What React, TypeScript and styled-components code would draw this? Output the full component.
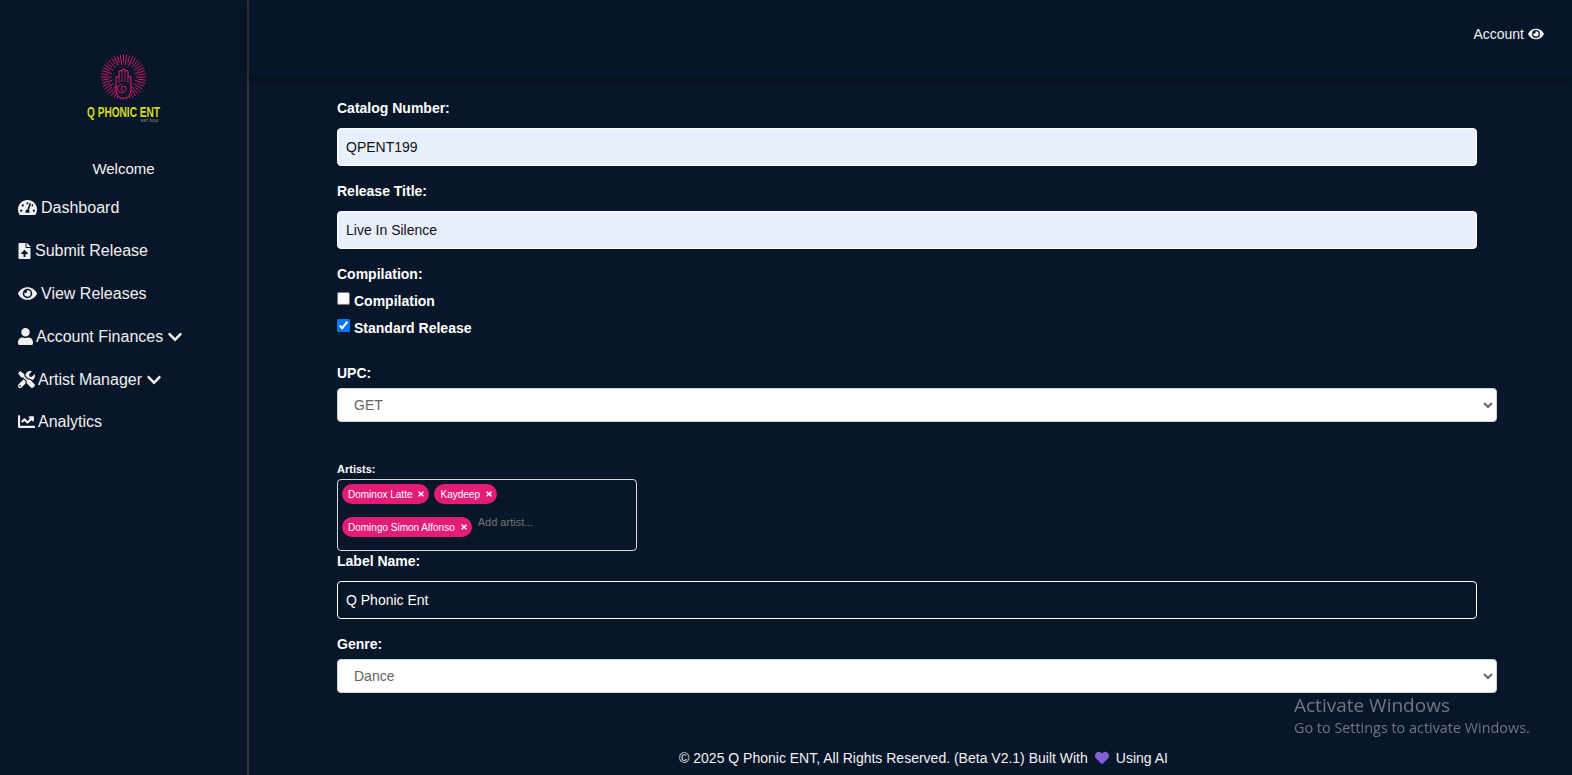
import React from 'react';
import styled, { createGlobalStyle } from 'styled-components';
import {
  FaChartLine,
  FaChevronDown,
  FaEye,
  FaFileUpload,
  FaHeart,
  FaTachometerAlt,
  FaTimes,
  FaTools,
  FaUser,
} from 'react-icons/fa';

const GlobalStyle = createGlobalStyle`
  html, body {
    margin: 0;
    height: 100%;
    overflow: hidden;
    background: #071628;
    font-family: "Liberation Sans", Arial, sans-serif;
    color: #fff;
  }
  * {
    box-sizing: border-box;
  }
`;

const Logo = () => (
  <LogoBox>
    <LogoArt width="89" height="89" viewBox="0 0 89 89">
      <g stroke="#d01866" strokeWidth="1" fill="none">
        {Array.from({ length: 44 }).map((_, i) => {
          const a = (i / 44) * Math.PI * 2;
          const inner = i % 2 ? 15 : 12;
          return (
            <line
              key={i}
              x1={44.5 + Math.cos(a) * inner}
              y1={37 + Math.sin(a) * inner}
              x2={44.5 + Math.cos(a) * 22.5}
              y2={37 + Math.sin(a) * 22.5}
            />
          );
        })}
      </g>
      <path
        d="M37 50 V38 a1.5 1.5 0 0 1 3 0 V32 a1.5 1.5 0 0 1 3 0 V30.5 a1.5 1.5 0 0 1 3 0 V32 a1.5 1.5 0 0 1 3 0 V38 a1.5 1.5 0 0 1 3 0 V50 a7.5 8.5 0 0 1 -15 0 Z"
        fill="#071628"
        stroke="#e01a70"
        strokeWidth="1.1"
      />
      <path d="M40 38 V43 M43 32 V42 M46 32 V42 M49 38 V43" fill="none" stroke="#e01a70" strokeWidth="0.8" />
      <path
        d="M44.5 51 a2.4 2.4 0 1 1 2.4 -2.4 a4.2 4.2 0 1 1 -4.2 -4.2"
        fill="none"
        stroke="#e01a70"
        strokeWidth="1"
      />
      <LogoTitle x="8" y="77" fontSize="14" textLength="73" lengthAdjust="spacingAndGlyphs">
        Q PHONIC ENT
      </LogoTitle>
      <LogoNote x="62" y="82" fontSize="3.6" textLength="17" lengthAdjust="spacingAndGlyphs">
        EST 2014
      </LogoNote>
    </LogoArt>
  </LogoBox>
);

const navItems = [
  { label: 'Dashboard', icon: <FaTachometerAlt />, w: 19, h: 17, gap: 4 },
  { label: 'Submit Release', icon: <FaFileUpload />, w: 13, h: 16, gap: 4 },
  { label: 'View Releases', icon: <FaEye />, w: 19, h: 17, gap: 4 },
  { label: 'Account Finances', icon: <FaUser />, w: 15, h: 17, gap: 3, more: true },
  { label: 'Artist Manager', icon: <FaTools />, w: 17, h: 17, gap: 3, more: true },
  { label: 'Analytics', icon: <FaChartLine />, w: 17, h: 17, gap: 3 },
];

const artists = ['Dominox Latte', 'Kaydeep', 'Domingo Simon Alfonso'];

const App = () => (
  <Page>
    <GlobalStyle />
    <Sidebar>
      <Logo />
      <Welcome>Welcome</Welcome>
      <Nav>
        {navItems.map((item) => (
          <NavItem key={item.label} $gap={item.gap}>
            <NavIcon $w={item.w} $h={item.h}>
              {item.icon}
            </NavIcon>
            <span>{item.label}</span>
            {item.more && (
              <Caret $w={14} $h={16}>
                <FaChevronDown />
              </Caret>
            )}
          </NavItem>
        ))}
      </Nav>
    </Sidebar>
    <Main>
      <Header>
        <AccountLink>
          Account
          <NavIcon $w={16} $h={14}>
            <FaEye />
          </NavIcon>
        </AccountLink>
      </Header>
      <Form>
        <Field>
          <Label>Catalog Number:</Label>
          <TextInput $filled readOnly value="QPENT199" />
        </Field>
        <Field>
          <Label>Release Title:</Label>
          <TextInput $filled readOnly value="Live In Silence" />
        </Field>
        <CheckGroup>
          <GroupLabel>Compilation:</GroupLabel>
          <CheckRow>
            <input type="checkbox" readOnly />
            Compilation
          </CheckRow>
          <CheckRow>
            <input type="checkbox" checked readOnly />
            Standard Release
          </CheckRow>
        </CheckGroup>
        <UpcField>
          <SelectLabel>UPC:</SelectLabel>
          <Select defaultValue="GET">
            <option>GET</option>
          </Select>
        </UpcField>
        <ArtistsField>
          <SmallLabel>Artists:</SmallLabel>
          <TagBox>
            {artists.map((name) => (
              <Tag key={name}>
                {name}
                <FaTimes size={8} />
              </Tag>
            ))}
            <AddArtist placeholder="Add artist..." readOnly />
          </TagBox>
        </ArtistsField>
        <NameField>
          <Label>Label Name:</Label>
          <TextInput readOnly value="Q Phonic Ent" />
        </NameField>
        <Field>
          <SelectLabel>Genre:</SelectLabel>
          <Select defaultValue="Dance">
            <option>Dance</option>
          </Select>
        </Field>
      </Form>
      <Footer>
        © 2025 Q Phonic ENT, All Rights Reserved. (Beta V2.1) Built With
        <FaHeart size={14} color="#8061d8" />
        Using AI
      </Footer>
    </Main>
    <Watermark>
      <strong>Activate Windows</strong>
      <span>Go to Settings to activate Windows.</span>
    </Watermark>
  </Page>
);

const Page = styled.div`
  display: flex;
  width: 1572px;
  height: 775px;
  background: #071628;
`;

const Sidebar = styled.aside`
  flex: 0 0 249px;
  height: 775px;
  padding-top: 40px;
  border-right: 2px solid #33393f;
  display: flex;
  flex-direction: column;
  align-items: center;
`;

const LogoBox = styled.div`
  width: 91px;
  height: 91px;
  border-left: 1px solid #0b1a2c;
  border-right: 1px solid #0b1a2c;
`;

const LogoArt = styled.svg`
  overflow: visible;
`;

const LogoTitle = styled.text`
  fill: #d6dc1c;
  font-family: "Liberation Sans Narrow", "Liberation Sans", sans-serif;
  font-weight: 700;
`;

const LogoNote = styled.text`
  fill: #a8a8a0;
  font-family: "Liberation Sans", sans-serif;
`;

const Welcome = styled.div`
  margin-top: 29px;
  font-size: 15px;
  line-height: 18px;
  color: #f2f2f2;
`;

const Nav = styled.nav`
  width: 100%;
  padding: 8px 0 0 18px;
  display: flex;
  flex-direction: column;
`;

const NavItem = styled.a<{ $gap: number }>`
  height: 43px;
  display: flex;
  align-items: center;
  gap: ${(props) => props.$gap}px;
  font-size: 16px;
  color: #f0f0f0;
  &:last-child {
    margin-top: -1px;
  }
`;

const NavIcon = styled.span<{ $w: number; $h: number }>`
  flex: none;
  display: flex;
  svg {
    width: ${(props) => props.$w}px;
    height: ${(props) => props.$h}px;
  }
`;

const Caret = styled(NavIcon)`
  margin-left: 2px;
`;

const Main = styled.main`
  flex: 1;
  min-width: 0;
  height: 775px;
  display: flex;
  flex-direction: column;
`;

const Header = styled.header`
  flex: 0 0 77px;
  padding: 25px 28px 0 0;
  display: flex;
  justify-content: flex-end;
  align-items: flex-start;
  background: #05152a;
  box-shadow: 0 2px 10px rgba(0, 0, 0, 0.5);
`;

const AccountLink = styled.div`
  display: flex;
  align-items: center;
  gap: 4px;
  font-size: 14px;
  line-height: 18px;
  color: #f2f2f2;
`;

const Form = styled.form`
  flex: 1;
  padding: 23px 0 0 88px;
  display: flex;
  flex-direction: column;
  align-items: flex-start;
`;

const Field = styled.div`
  width: 1160px;
  margin-bottom: 17px;
`;

const Label = styled.label`
  display: block;
  height: 28px;
  font-size: 14px;
  font-weight: 700;
  line-height: 16px;
  color: #fff;
`;

const GroupLabel = styled(Label)`
  height: 21px;
`;

const SelectLabel = styled(Label)`
  height: 23px;
`;

const SmallLabel = styled(Label)`
  height: 17px;
  font-size: 11px;
  line-height: 14px;
`;

const TextInput = styled.input<{ $filled?: boolean }>`
  display: block;
  width: 1140px;
  height: 38px;
  padding: 0 8px;
  border: 1px solid #fff;
  border-radius: 4px;
  outline: none;
  font: 14px "Liberation Sans", Arial, sans-serif;
  color: ${(props) => (props.$filled ? '#111' : '#fff')};
  background: ${(props) => (props.$filled ? '#e8f0fe' : 'transparent')};
`;

const Select = styled.select`
  display: block;
  width: 1160px;
  height: 34px;
  padding: 0 12px;
  border: 1px solid #ced4da;
  border-radius: 4px;
  font: 14px "Liberation Sans", Arial, sans-serif;
  color: #666;
  background: #fff;
`;

const CheckGroup = styled.div`
  height: 75px;
`;

const CheckRow = styled.label`
  height: 27px;
  display: flex;
  align-items: center;
  gap: 4px;
  font-size: 14px;
  font-weight: 700;
  color: #fff;
  input {
    width: 13px;
    height: 13px;
    margin: 0 0 4px;
  }
`;

const UpcField = styled(Field)`
  margin-top: 24px;
  margin-bottom: 40px;
`;

const ArtistsField = styled.div``;

const NameField = styled(Field)`
  margin-top: 2px;
`;

const TagBox = styled.div`
  width: 300px;
  height: 72px;
  padding: 4px 12px 4px 4px;
  border: 1px solid #d5d9de;
  border-radius: 4px;
  display: flex;
  flex-wrap: wrap;
  align-items: flex-start;
  align-content: flex-start;
  gap: 13px 5px;
`;

const Tag = styled.span`
  height: 20px;
  padding: 0 4px 0 6px;
  border-radius: 10px;
  display: inline-flex;
  align-items: center;
  gap: 5px;
  font-size: 10px;
  color: #fff;
  background: #e31c79;
`;

const AddArtist = styled.input`
  width: 90px;
  height: 12px;
  margin: -1px 0 0 1px;
  padding: 0;
  border: 0;
  outline: none;
  font: 11px "Liberation Sans", Arial, sans-serif;
  background: transparent;
  color: #fff;
  &::placeholder {
    color: #757575;
  }
`;

const Footer = styled.footer`
  flex: 0 0 37px;
  display: flex;
  align-items: center;
  justify-content: center;
  gap: 7px;
  padding: 3px 0 0 26px;
  font-size: 14px;
  color: #f2f2f2;
`;

const Watermark = styled.div`
  position: fixed;
  left: 1294px;
  top: 692px;
  display: flex;
  flex-direction: column;
  font-family: "Open Sans", sans-serif;
  color: #6f7784;
  strong {
    font-weight: 400;
    font-size: 19px;
    line-height: 26px;
  }
  span {
    font-size: 14.4px;
    line-height: 20px;
  }
`;

export default App;
